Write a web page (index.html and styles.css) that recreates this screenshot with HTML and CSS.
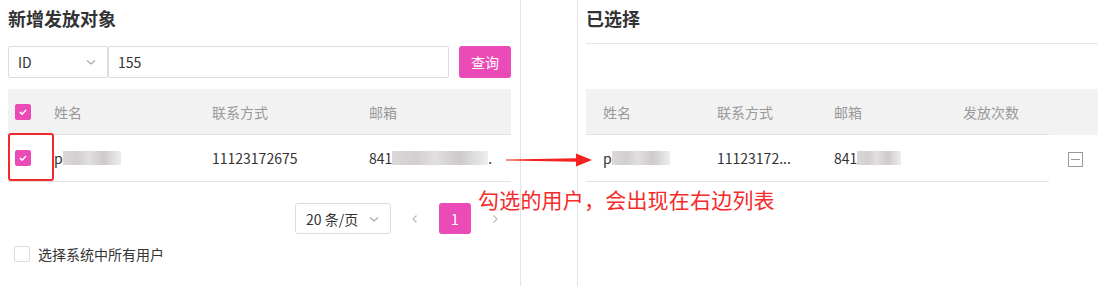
FILE: index.html
```html
<!DOCTYPE html>
<html lang="zh-CN">
<head>
<meta charset="utf-8">
<title>新增发放对象</title>
<link rel="stylesheet" href="styles.css">
</head>
<body>
<div class="page">
  <section class="left">
    <h2 class="title">新增发放对象</h2>
    <div class="search">
      <div class="select id-select"><span>ID</span><svg class="chev" viewBox="0 0 12 12"><path d="M2 4.5 L6 8 L10 4.5" /></svg></div>
      <div class="input">155</div>
      <button class="btn">查询</button>
    </div>
    <div class="ltable">
      <div class="lhead">
        <div class="cell chk"><span class="cb on"><svg viewBox="0 0 16 16"><path d="M4.5 8.2 L7 10.5 L11.5 5.8"/></svg></span></div>
        <div class="cell c-name">姓名</div>
        <div class="cell c-phone">联系方式</div>
        <div class="cell c-mail">邮箱</div>
      </div>
      <div class="lrow">
        <div class="cell chk"><span class="cb on"><svg viewBox="0 0 16 16"><path d="M4.5 8.2 L7 10.5 L11.5 5.8"/></svg></span></div>
        <div class="cell c-name">p<span class="blur w58"></span></div>
        <div class="cell c-phone">11123172675</div>
        <div class="cell c-mail">841<span class="blur w96"></span>.</div>
      </div>
      <div class="redbox"></div>
    </div>
    <div class="pager">
      <div class="select size-select"><span>20 条/页</span><svg class="chev" viewBox="0 0 12 12"><path d="M2 4.5 L6 8 L10 4.5" /></svg></div>
      <div class="pg nav"><svg viewBox="0 0 12 12"><path d="M7.5 2.5 L4 6 L7.5 9.5"/></svg></div>
      <div class="pg cur">1</div>
      <div class="pg nav"><svg viewBox="0 0 12 12"><path d="M4.5 2.5 L8 6 L4.5 9.5"/></svg></div>
    </div>
    <label class="all"><span class="cb"></span>选择系统中所有用户</label>
  </section>
  <div class="mid"></div>
  <section class="right">
    <h2 class="title">已选择</h2>
    <div class="rule"></div>
    <div class="rhead">
      <div class="rcells">
        <div class="cell r-name">姓名</div>
        <div class="cell r-phone">联系方式</div>
        <div class="cell r-mail">邮箱</div>
        <div class="cell r-cnt">发放次数</div>
      </div>
    </div>
    <div class="rrow">
      <div class="rcells">
        <div class="cell r-name">p<span class="blur w58"></span></div>
        <div class="cell r-phone">11123172...</div>
        <div class="cell r-mail">841<span class="blur w44"></span></div>
        <div class="cell r-cnt"></div>
      </div>
      <span class="minus"></span>
    </div>
  </section>
  <svg class="arrow" viewBox="0 0 86 16"><path d="M0 7.6 L70 6.2 L70 1.5 L86 8 L70 14.5 L70 9.8 L0 8.4 Z"/></svg>
  <div class="note">勾选的用户，会出现在右边列表</div>
</div>
</body>
</html>
```
FILE: styles.css
```css
* { box-sizing: border-box; margin: 0; padding: 0; }
html, body { background: #fff; }
body {
  font-family: "Noto Sans CJK SC", "Noto Sans", "Liberation Sans", sans-serif;
  font-size: 14px;
  color: #333;
  width: 1098px;
  height: 286px;
  overflow: hidden;
}
.page {
  position: relative;
  display: flex;
  height: 286px;
}
.left {
  width: 520px;
  padding: 0 9px 0 8px;
}
.mid {
  width: 58px;
  border-left: 1px solid #e4e4e4;
  border-right: 1px solid #e4e4e4;
}
.right {
  flex: 1;
  padding-left: 8px;
}
.title {
  font-size: 18px;
  font-weight: 700;
  color: #333;
  line-height: 24px;
  padding-top: 6px;
  height: 43px;
}
.rule {
  height: 1px;
  background: #e6e6e6;
}
.search {
  display: flex;
  height: 32px;
  margin-top: 3px;
}
.select {
  display: flex;
  align-items: center;
  justify-content: space-between;
  border: 1px solid #dcdcdc;
  border-radius: 2px;
  color: #333;
}
.id-select {
  width: 100px;
  padding: 0 10px 0 9px;
}
.chev {
  width: 12px;
  height: 12px;
  fill: none;
  stroke: #aaa;
  stroke-width: 1.2;
}
.input {
  width: 341px;
  border: 1px solid #dcdcdc;
  border-radius: 2px;
  padding-left: 9px;
  line-height: 30px;
  color: #333;
}
.btn {
  margin-left: 10px;
  width: 52px;
  border: none;
  border-radius: 3px;
  background: #ea4bb6;
  color: #fff;
  font-family: inherit;
  font-size: 14px;
}
.ltable {
  position: relative;
  margin-top: 11px;
}
.lhead, .lrow {
  display: flex;
  align-items: center;
  height: 47px;
  border-bottom: 1px solid #e2e2e2;
}
.lhead {
  background: #f2f2f2;
  height: 46px;
  color: #999;
}
.cell { white-space: nowrap; }
.chk { width: 46px; padding-left: 7px; display: flex; align-items: center; }
.c-name { width: 158px; display: flex; align-items: center; }
.c-phone { width: 157px; }
.c-mail { display: flex; align-items: center; }
.cb {
  display: inline-block;
  width: 16px;
  height: 16px;
  border: 1px solid #dcdcdc;
  border-radius: 2px;
  background: #fff;
}
.cb.on {
  background: #ea4bb6;
  border-color: #ea4bb6;
}
.cb svg {
  display: block;
  width: 14px;
  height: 14px;
  fill: none;
  stroke: #fff;
  stroke-width: 1.8;
}
.blur {
  display: inline-block;
  height: 14px;
  background: linear-gradient(90deg, #dcd8da 0%, #d3cfd1 25%, #e2dfe0 45%, #cec9cb 70%, #eceef0 100%);
  filter: blur(0.6px);
}
.w58 { width: 58px; }
.w96 { width: 96px; }
.w44 { width: 44px; }
.redbox {
  position: absolute;
  left: 0;
  top: 44px;
  width: 46px;
  height: 48px;
  border: 2px solid #f22a2a;
  border-radius: 3px;
}
.pager {
  display: flex;
  justify-content: flex-end;
  gap: 8px;
  margin-top: 21px;
  height: 31px;
}
.size-select {
  width: 96px;
  padding: 0 10px 0 10px;
  border-radius: 3px;
}
.pg {
  width: 32px;
  display: flex;
  align-items: center;
  justify-content: center;
  border-radius: 3px;
}
.pg svg {
  width: 12px;
  height: 12px;
  fill: none;
  stroke: #bbb;
  stroke-width: 1.2;
}
.pg.cur {
  background: #ea4bb6;
  color: #fff;
}
.all {
  display: flex;
  align-items: center;
  gap: 8px;
  margin-top: 11px;
  padding-left: 6px;
  font-size: 14px;
  color: #333;
  height: 18px;
}
.rhead {
  margin-top: 45px;
  height: 46px;
  background: #f2f2f2;
  color: #999;
}
.rcells {
  display: flex;
  align-items: center;
  width: 463px;
  height: 100%;
  border-bottom: 1px solid #e2e2e2;
  padding-left: 17px;
}
.rrow {
  display: flex;
  align-items: center;
  height: 47px;
}
.r-name { width: 114px; display: flex; align-items: center; }
.r-phone { width: 117px; }
.r-mail { width: 129px; display: flex; align-items: center; }
.minus {
  position: relative;
  display: inline-block;
  margin-left: 19px;
  margin-top: 2px;
  width: 15px;
  height: 15px;
  border: 1px solid #999;
}
.minus::after {
  content: "";
  position: absolute;
  left: 2px;
  right: 2px;
  top: 6px;
  height: 1px;
  background: #999;
}
.arrow {
  position: absolute;
  left: 506px;
  top: 152px;
  width: 86px;
  height: 16px;
  fill: #f4231f;
}
.note {
  position: absolute;
  left: 478px;
  top: 184px;
  font-size: 21px;
  letter-spacing: 0.2px;
  line-height: 30px;
  color: #f52a2a;
  white-space: nowrap;
}
```
